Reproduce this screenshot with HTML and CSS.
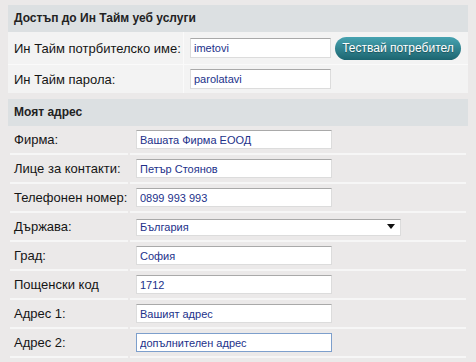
FILE: index.html
```html
<!DOCTYPE html>
<html lang="bg">
<head>
    <meta charset="UTF-8">
    <title>Настройки на акаунта</title>
    <link rel="stylesheet" href="styles.css">
</head>
<body>
    <div class="page">
        <!-- Web access -->
        <section class="box access">
            <h3 class="box-head">Достъп до Ин Тайм уеб услуги</h3>
            <div class="rows">
                <label class="cell label" for="user">Ин Тайм потрбителско име:</label>
                <div class="cell field">
                    <input type="text" id="user" class="text" value="imetovi">
                    <button type="button" class="test-btn">Тествай потребител</button>
                </div>
                <label class="cell label" for="pass">Ин Тайм парола:</label>
                <div class="cell field">
                    <input type="text" id="pass" class="text" value="parolatavi">
                </div>
            </div>
        </section>

        <!-- Address -->
        <section class="box address">
            <h3 class="box-head">Моят адрес</h3>
            <div class="rows">
                <label class="cell label" for="firm">Фирма:</label>
                <div class="cell field"><input type="text" id="firm" class="text" value="Вашата Фирма ЕООД"></div>

                <label class="cell label" for="contact">Лице за контакти:</label>
                <div class="cell field"><input type="text" id="contact" class="text" value="Петър Стоянов"></div>

                <label class="cell label" for="phone">Телефонен номер:</label>
                <div class="cell field"><input type="text" id="phone" class="text" value="0899 993 993"></div>

                <label class="cell label" for="country">Държава:</label>
                <div class="cell field">
                    <div class="select-wrap">
                        <select id="country" class="select">
                            <option>България</option>
                        </select>
                    </div>
                </div>

                <label class="cell label" for="city">Град:</label>
                <div class="cell field"><input type="text" id="city" class="text" value="София"></div>

                <label class="cell label" for="zip">Пощенски код</label>
                <div class="cell field"><input type="text" id="zip" class="text" value="1712"></div>

                <label class="cell label" for="addr1">Адрес 1:</label>
                <div class="cell field"><input type="text" id="addr1" class="text" value="Вашият адрес"></div>

                <label class="cell label" for="addr2">Адрес 2:</label>
                <div class="cell field"><input type="text" id="addr2" class="text focused" value="допълнителен адрес"></div>
            </div>
        </section>
    </div>
</body>
</html>
```

FILE: styles.css
```css
body {
    margin: 0;
    background: #ebe9e9;
    font-family: "Liberation Sans", Arial, sans-serif;
    color: #151515;
}
.page {
    padding: 5px 8px 0;
    display: flex;
    flex-direction: column;
    gap: 6px;
}
.box-head {
    margin: 0;
    height: 27px;
    line-height: 27px;
    padding-left: 6px;
    background: #dce0e2;
    font-size: 12px;
    font-weight: bold;
    color: #222;
}
.cell {
    display: flex;
    align-items: center;
}
.label {
    font-size: 13px;
}
.text {
    box-sizing: border-box;
    height: 20px;
    padding: 0 3px;
    border: 1px solid #dcdcdc;
    border-top-color: #a9a9a9;
    background: #fff;
    font-family: "Liberation Sans", Arial, sans-serif;
    font-size: 11px;
    color: #22318a;
    outline: none;
}
.text.focused {
    border-color: #7d9fcc;
}

/* first box: light rows */
.access .rows {
    display: grid;
    grid-template-columns: 175px 1fr;
    grid-template-rows: 32px 28px;
    gap: 1px;
    background: #fafafa;
}
.access .cell {
    background: #f3f3f3;
}
.access .label {
    padding-left: 6px;
}
.access .field {
    padding-left: 6px;
    gap: 4px;
}
.access .text {
    width: 141px;
}
.test-btn {
    height: 23px;
    width: 126px;
    padding: 0;
    border: none;
    border-radius: 12px;
    background: linear-gradient(#47a3b1, #1c6570);
    color: #fff;
    font-family: "Liberation Sans", Arial, sans-serif;
    font-size: 12px;
    text-shadow: 0 1px 1px rgba(0, 0, 0, 0.35);
    cursor: pointer;
}

/* second box: rows on the page colour */
.address .rows {
    display: grid;
    grid-template-columns: 118px 1fr;
    column-gap: 2px;
    padding: 0 2px 0;
    grid-auto-rows: 29px;
}
.address .cell {
    border-bottom: 2px solid #f6f6f6;
    box-sizing: border-box;
}
.address .label {
    padding-left: 4px;
}
.address .field {
    padding-left: 6px;
}
.address .text {
    width: 196px;
    height: 19px;
}
.select-wrap {
    position: relative;
    width: 265px;
}
.select {
    appearance: none;
    box-sizing: border-box;
    width: 100%;
    height: 17px;
    padding: 0 3px;
    border: 1px solid #dcdcdc;
    border-top-color: #a9a9a9;
    background: #fff;
    font-family: "Liberation Sans", Arial, sans-serif;
    font-size: 11px;
    color: #22318a;
    border-radius: 0;
}
/* dropdown arrow */
.select-wrap::after {
    content: "";
    position: absolute;
    right: 6px;
    top: 7px;
    border-left: 4px solid transparent;
    border-right: 4px solid transparent;
    border-top: 5px solid #111;
}
```
